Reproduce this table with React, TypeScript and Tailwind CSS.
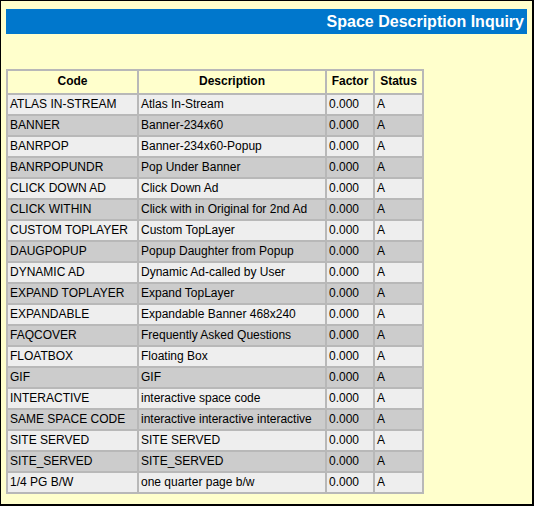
import React from "react";

const rows: [string, string][] = [
  ["ATLAS IN-STREAM", "Atlas In-Stream"],
  ["BANNER", "Banner-234x60"],
  ["BANRPOP", "Banner-234x60-Popup"],
  ["BANRPOPUNDR", "Pop Under Banner"],
  ["CLICK DOWN AD", "Click Down Ad"],
  ["CLICK WITHIN", "Click with in Original for 2nd Ad"],
  ["CUSTOM TOPLAYER", "Custom TopLayer"],
  ["DAUGPOPUP", "Popup Daughter from Popup"],
  ["DYNAMIC AD", "Dynamic Ad-called by User"],
  ["EXPAND TOPLAYER", "Expand TopLayer"],
  ["EXPANDABLE", "Expandable Banner 468x240"],
  ["FAQCOVER", "Frequently Asked Questions"],
  ["FLOATBOX", "Floating Box"],
  ["GIF", "GIF"],
  ["INTERACTIVE", "interactive space code"],
  ["SAME SPACE CODE", "interactive interactive interactive"],
  ["SITE SERVED", "SITE SERVED"],
  ["SITE_SERVED", "SITE_SERVED"],
  ["1/4 PG B/W", "one quarter page b/w"],
];

export default function App() {
  const td = "border border-[#b8b8b8] pl-[2px] pr-[3px] py-[1px] leading-[17px] whitespace-nowrap";
  const th = "border border-[#b8b8b8] px-[3px] pt-[1px] pb-[3px] leading-[18px] font-bold text-center whitespace-nowrap";
  return (
    <div
      className="w-[534px] h-[506px] bg-[#ffffcc] border-l border-t border-r-2 border-b-2 border-black pl-[5px] pr-[5px] pt-[8px] text-black"
      style={{ fontFamily: '"Liberation Sans", Arial, sans-serif' }}
    >
      <div className="h-[25px] bg-[#0077cc] text-white font-bold text-[16px] leading-[25px] text-right pr-[3px]">
        Space Description Inquiry
      </div>
      <table
        className="mt-[35px] w-[416px] table-fixed text-[12px] border border-[#b8b8b8]"
        style={{ borderCollapse: "separate", borderSpacing: 0 }}
      >
        <colgroup>
          <col style={{ width: 131 }} />
          <col style={{ width: 188 }} />
          <col style={{ width: 48 }} />
          <col style={{ width: 49 }} />
        </colgroup>
        <thead>
          <tr className="bg-[#ffffcc]">
            <th className={th}>Code</th>
            <th className={th}>Description</th>
            <th className={th}>Factor</th>
            <th className={th}>Status</th>
          </tr>
        </thead>
        <tbody>
          {rows.map(([code, desc], i) => (
            <tr key={code} className={i % 2 === 0 ? "bg-[#eeeeee]" : "bg-[#cccccc]"}>
              <td className={td}>{code}</td>
              <td className={td}>{desc}</td>
              <td className={td}>0.000</td>
              <td className={td}>A</td>
            </tr>
          ))}
        </tbody>
      </table>
    </div>
  );
}
